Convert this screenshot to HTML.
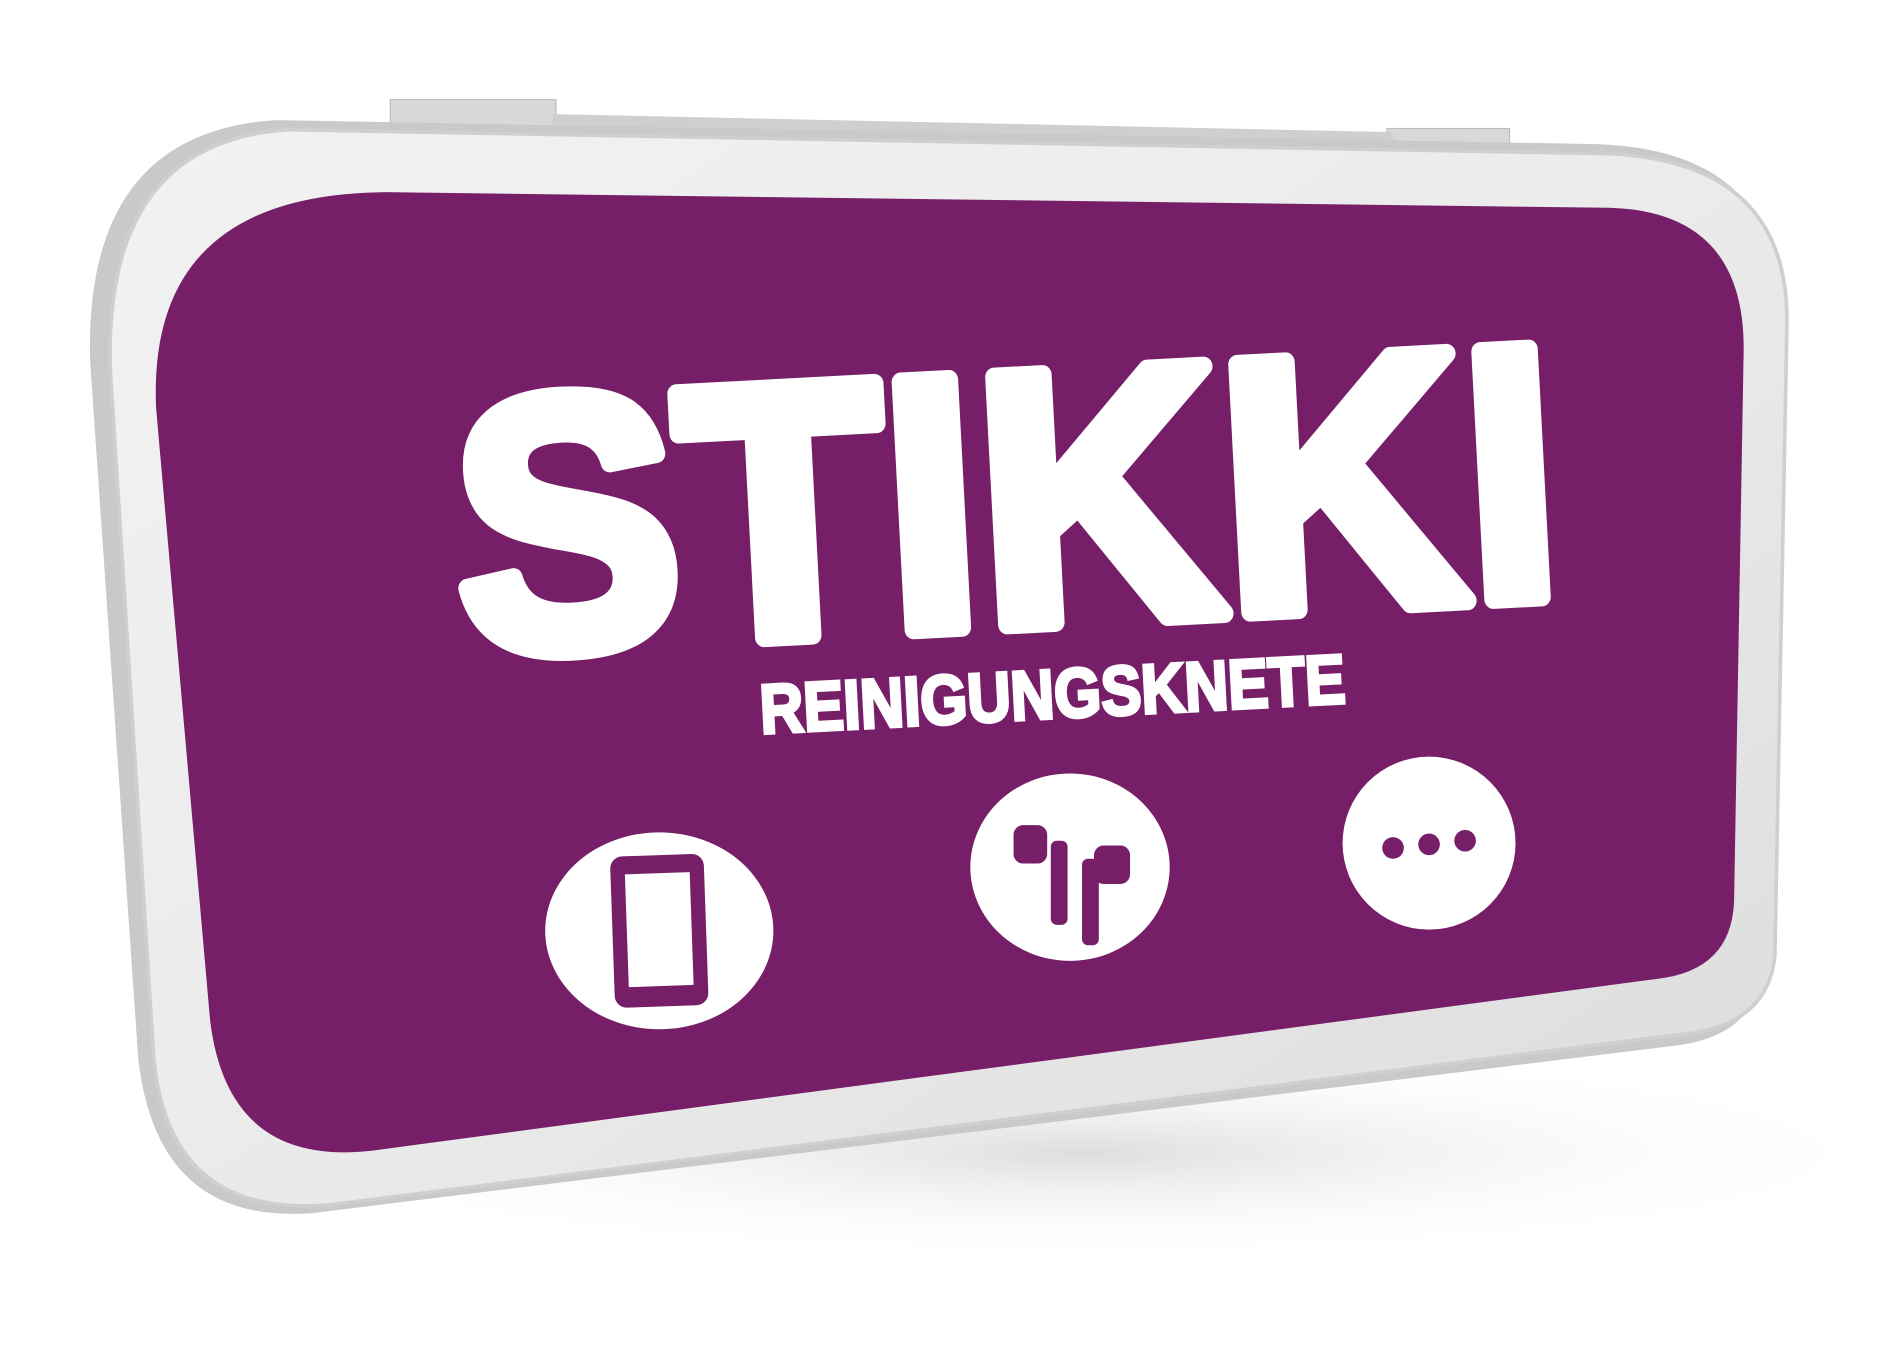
<!DOCTYPE html>
<html><head><meta charset="utf-8"><style>
html,body{margin:0;padding:0;background:#fff;width:1883px;height:1362px;overflow:hidden}
svg{display:block}
</style></head><body>
<svg width="1883" height="1362" viewBox="0 0 1568 1134" preserveAspectRatio="none">
<defs>
<linearGradient id="tin" x1="0" y1="0" x2="1" y2="1">
<stop offset="0" stop-color="#f2f2f2"/><stop offset="0.5" stop-color="#ebebeb"/><stop offset="1" stop-color="#dcdcdc"/>
</linearGradient>
<radialGradient id="sh" cx="0.5" cy="0.5" r="0.5">
<stop offset="0" stop-color="#cfcfcf" stop-opacity="0.7"/><stop offset="1" stop-color="#fff" stop-opacity="0"/>
</radialGradient>
</defs>
<rect width="1568" height="1134" fill="#fff"/>
<ellipse cx="900" cy="960" rx="700" ry="90" fill="url(#sh)"/>
<rect x="325" y="83" width="138" height="22" fill="#d8d8d8" stroke="#bdbdbd"/>
<rect x="1155" y="107" width="102" height="22" fill="#d8d8d8" stroke="#bdbdbd"/>
<path d="M460 95 L1160 110 L1160 125 L460 108 Z" fill="#cfcfcf"/>
<path d="M230 100 L1330 120 Q1480 125 1485 260 L1470 800 Q1465 860 1400 870 L260 1010 Q130 1020 115 880 L75 300 Q70 110 230 100 Z" fill="#c9c9c9"/>
<path d="M240 108 L1340 128 Q1490 135 1488 270 L1478 795 Q1473 850 1410 860 L275 1003 Q140 1015 128 880 L92 310 Q85 118 240 108 Z" fill="url(#tin)" stroke="#cfcfcf" stroke-width="3"/>
<path d="M320 160 L1340 173 Q1452 176 1452 290 L1444 750 Q1442 808 1380 815 L310 958 Q190 972 175 850 L130 340 Q122 162 320 160 Z" fill="#761f68"/>
<text x="378" y="520" font-family="Liberation Sans, DejaVu Sans, sans-serif" font-weight="bold" font-size="300" fill="#fff" stroke="#fff" stroke-width="16" stroke-linejoin="round" textLength="920" lengthAdjust="spacingAndGlyphs" transform="rotate(-3 840 420)">STIKKI</text>
<text x="632" y="598" font-family="Liberation Sans, DejaVu Sans, sans-serif" font-weight="bold" font-size="58" fill="#fff" stroke="#fff" stroke-width="3" textLength="488" lengthAdjust="spacingAndGlyphs" transform="rotate(-3 875 570)">REINIGUNGSKNETE</text>
<ellipse cx="549" cy="775" rx="95" ry="82" fill="#fff"/>
<rect x="510" y="712" width="78" height="126" rx="10" fill="#761f68" transform="rotate(-2 549 775)"/>
<rect x="522" y="727" width="54" height="94" fill="#fff" transform="rotate(-2 549 775)"/>
<ellipse cx="891" cy="722" rx="83" ry="78" fill="#fff"/>
<rect x="844" y="687" width="28" height="32" rx="8" fill="#761f68"/>
<rect x="875" y="700" width="14" height="70" rx="5" fill="#761f68"/>
<rect x="911" y="704" width="30" height="32" rx="8" fill="#761f68"/>
<rect x="901" y="715" width="14" height="72" rx="5" fill="#761f68"/>
<ellipse cx="1190" cy="702" rx="72" ry="72" fill="#fff"/>
<circle cx="1160" cy="706" r="9" fill="#761f68"/>
<circle cx="1190" cy="703" r="9" fill="#761f68"/>
<circle cx="1220" cy="700" r="9" fill="#761f68"/>
</svg>
</body></html>
